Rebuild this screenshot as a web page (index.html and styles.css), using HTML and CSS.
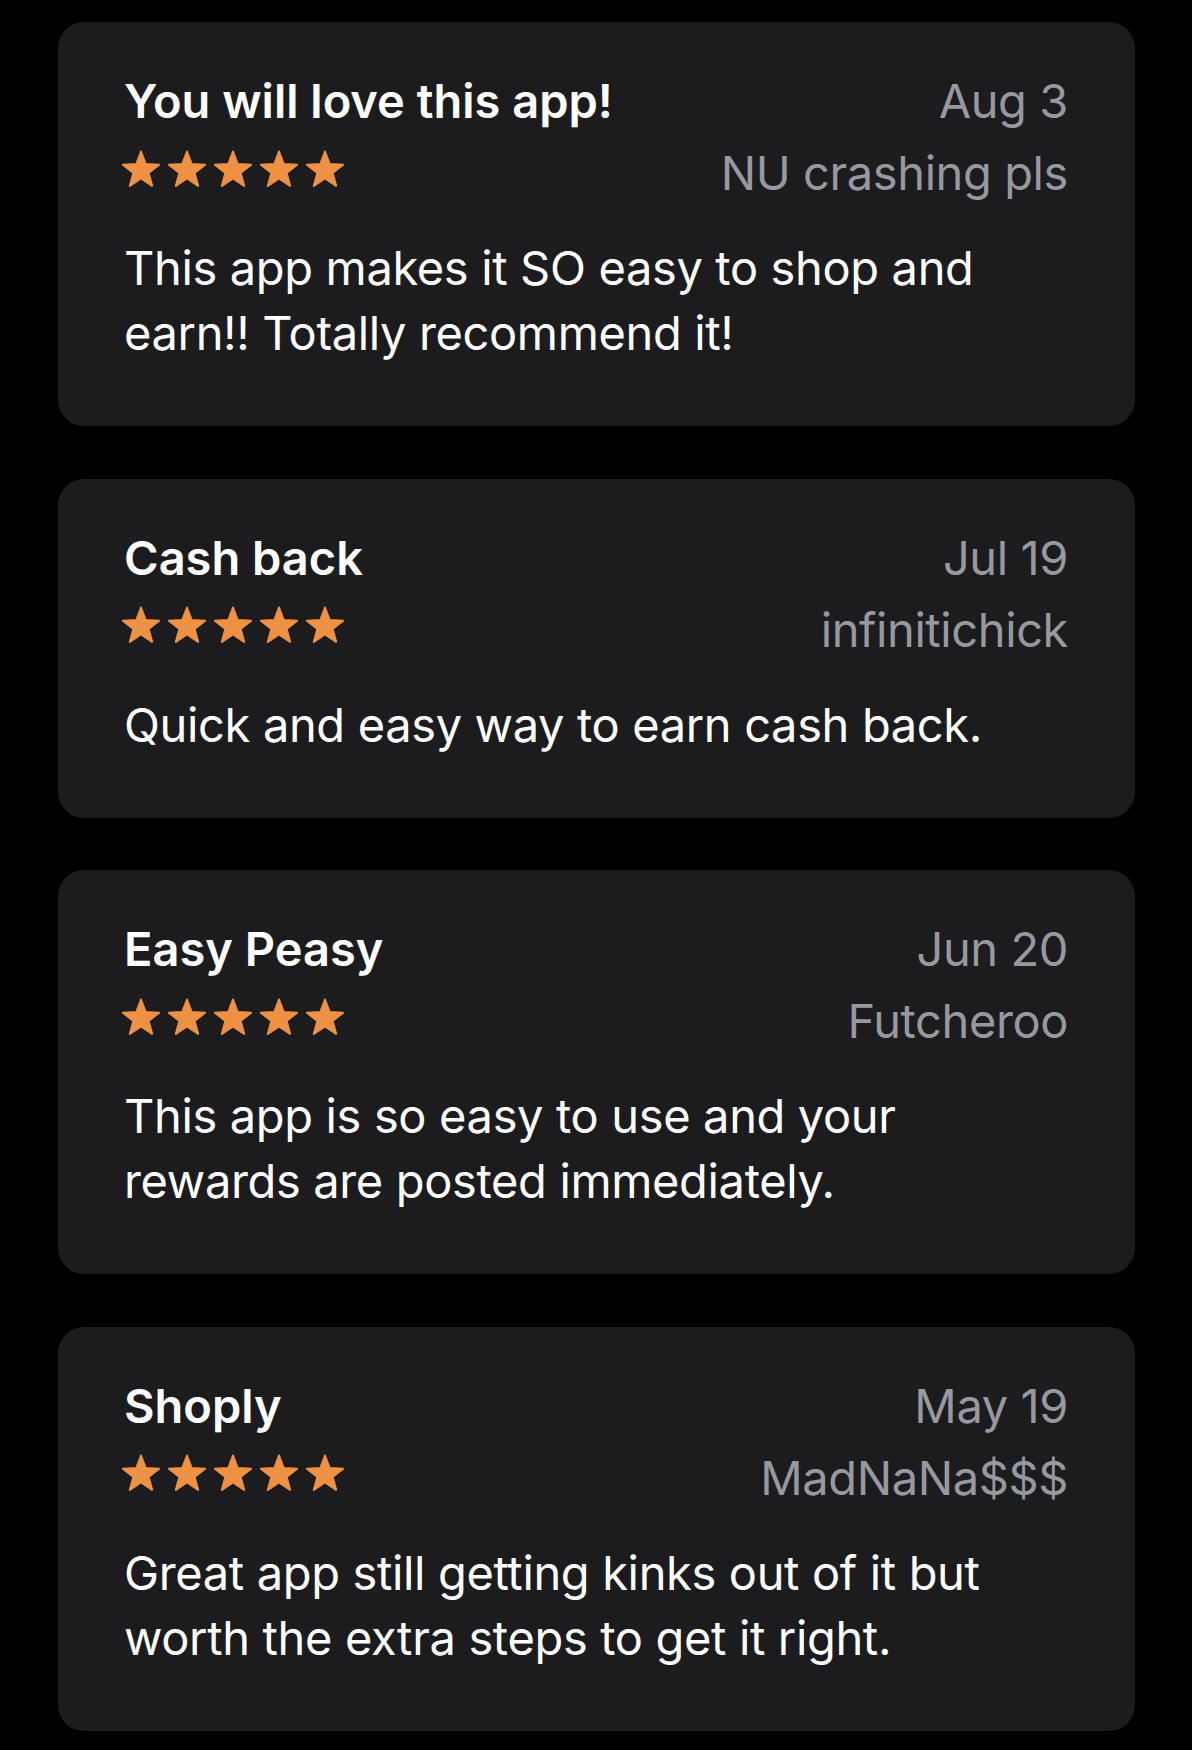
FILE: index.html
```html
<!DOCTYPE html>
<html lang="en">
<head>
<meta charset="utf-8">
<title>Reviews</title>
<link rel="stylesheet" href="styles.css">
</head>
<body>
<svg width="0" height="0" class="defs" aria-hidden="true">
  <defs>
    <path id="star" d="M20 1.5L24.7 14.03L38.07 14.63L27.61 22.97L31.17 35.87L20 28.5L8.83 35.87L12.39 22.97L1.93 14.63L15.3 14.03Z"/>
  </defs>
</svg>
<main class="list">
  <article class="card">
    <header class="head">
      <div class="left">
        <h2 class="title">You will love this app!</h2>
        <div class="stars">
          <svg viewBox="0 0 40 38"><use href="#star"/></svg><svg viewBox="0 0 40 38"><use href="#star"/></svg><svg viewBox="0 0 40 38"><use href="#star"/></svg><svg viewBox="0 0 40 38"><use href="#star"/></svg><svg viewBox="0 0 40 38"><use href="#star"/></svg>
        </div>
      </div>
      <div class="right">
        <div class="date">Aug 3</div>
        <div class="author">NU crashing pls</div>
      </div>
    </header>
    <p class="body">This app makes it SO easy to shop and<br>earn!! Totally recommend it!</p>
  </article>

  <article class="card">
    <header class="head">
      <div class="left">
        <h2 class="title">Cash back</h2>
        <div class="stars">
          <svg viewBox="0 0 40 38"><use href="#star"/></svg><svg viewBox="0 0 40 38"><use href="#star"/></svg><svg viewBox="0 0 40 38"><use href="#star"/></svg><svg viewBox="0 0 40 38"><use href="#star"/></svg><svg viewBox="0 0 40 38"><use href="#star"/></svg>
        </div>
      </div>
      <div class="right">
        <div class="date">Jul 19</div>
        <div class="author">infinitichick</div>
      </div>
    </header>
    <p class="body">Quick and easy way to earn cash back.</p>
  </article>

  <article class="card">
    <header class="head">
      <div class="left">
        <h2 class="title">Easy Peasy</h2>
        <div class="stars">
          <svg viewBox="0 0 40 38"><use href="#star"/></svg><svg viewBox="0 0 40 38"><use href="#star"/></svg><svg viewBox="0 0 40 38"><use href="#star"/></svg><svg viewBox="0 0 40 38"><use href="#star"/></svg><svg viewBox="0 0 40 38"><use href="#star"/></svg>
        </div>
      </div>
      <div class="right">
        <div class="date">Jun 20</div>
        <div class="author">Futcheroo</div>
      </div>
    </header>
    <p class="body">This app is so easy to use and your<br>rewards are posted immediately.</p>
  </article>

  <article class="card">
    <header class="head">
      <div class="left">
        <h2 class="title">Shoply</h2>
        <div class="stars">
          <svg viewBox="0 0 40 38"><use href="#star"/></svg><svg viewBox="0 0 40 38"><use href="#star"/></svg><svg viewBox="0 0 40 38"><use href="#star"/></svg><svg viewBox="0 0 40 38"><use href="#star"/></svg><svg viewBox="0 0 40 38"><use href="#star"/></svg>
        </div>
      </div>
      <div class="right">
        <div class="date">May 19</div>
        <div class="author">MadNaNa$$$</div>
      </div>
    </header>
    <p class="body">Great app still getting kinks out of it but<br>worth the extra steps to get it right.</p>
  </article>
</main>
</body>
</html>
```

FILE: styles.css
```css
* {
  box-sizing: border-box;
}

html, body {
  margin: 0;
  padding: 0;
  background: #000;
}

body {
  font-family: Inter, "Noto Sans", "Liberation Sans", sans-serif;
  color: #fff;
  -webkit-font-smoothing: antialiased;
}

.defs {
  position: absolute;
  width: 0;
  height: 0;
  overflow: hidden;
}

.list {
  display: flex;
  flex-direction: column;
  gap: 52.5px;
  padding: 22px 57px 19px 58px;
}

.card {
  background: #1c1c1e;
  border-radius: 26px;
  padding: 49px 67px 61px 66px;
}

.head {
  display: flex;
  justify-content: space-between;
  align-items: flex-start;
}

.left {
  display: flex;
  flex-direction: column;
}

.title {
  margin: 0;
  font-size: 47px;
  font-weight: 600;
  line-height: 60px;
  letter-spacing: 0;
}

.stars {
  display: flex;
  gap: 6px;
  margin-top: 18.5px;
  margin-left: -3px;
  height: 38px;
}

.stars svg {
  width: 40px;
  height: 38px;
  fill: #ee9143;
  stroke: #ee9143;
  stroke-width: 2;
  stroke-linejoin: round;
}

.right {
  display: flex;
  flex-direction: column;
  align-items: flex-end;
  color: #98989f;
  font-size: 47px;
  line-height: 60px;
  letter-spacing: -0.4px;
}

.author {
  margin-top: 12px;
}

.body {
  margin: 32px 0 0;
  font-size: 47px;
  line-height: 65px;
  letter-spacing: -0.35px;
}
```
